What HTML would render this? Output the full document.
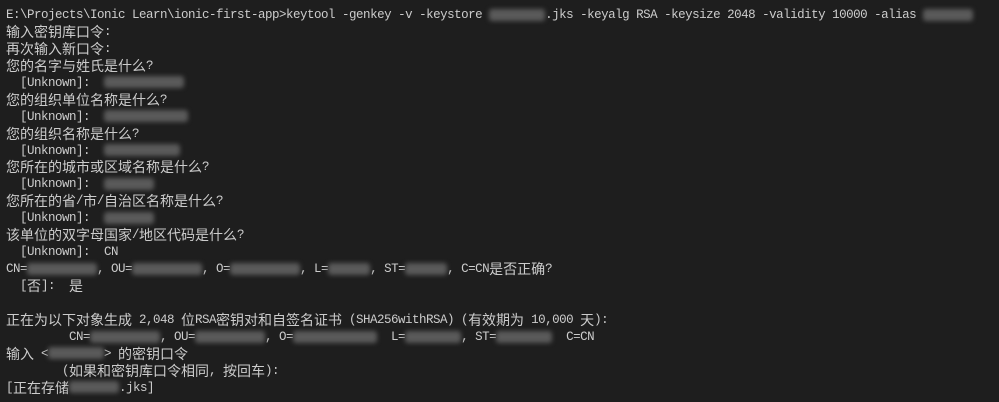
<!DOCTYPE html>
<html><head><meta charset="utf-8"><style>
html,body{margin:0;padding:0;background:#1e1e1e;}
body{width:999px;height:402px;overflow:hidden;position:relative;}
.t{position:absolute;left:6px;top:7px;color:#cccccc;font-family:"Liberation Mono","Noto Sans CJK SC",monospace;font-size:12.5px;letter-spacing:-0.5px;}
.t div{height:16.95px;line-height:16.95px;white-space:pre;overflow:visible;}
.c{font-family:"Noto Sans CJK SC","Liberation Sans",sans-serif;font-size:14px;line-height:10px;letter-spacing:0;position:relative;top:2px;}
.b{display:inline-block;background:#5a5a5a;filter:blur(2.5px);height:12px;vertical-align:middle;border-radius:3px;}
</style></head><body>
<div class="t">
<div>E:\Projects\Ionic Learn\ionic-first-app&gt;keytool -genkey -v -keystore <span class="b" style="width:56px"></span>.jks -keyalg RSA -keysize 2048 -validity 10000 -alias <span class="b" style="width:50px"></span></div>
<div><span class="c">输入密钥库口令</span>:</div>
<div><span class="c">再次输入新口令</span>:</div>
<div><span class="c">您的名字与姓氏是什么</span>?</div>
<div>  [Unknown]:  <span class="b" style="width:80px"></span></div>
<div><span class="c">您的组织单位名称是什么</span>?</div>
<div>  [Unknown]:  <span class="b" style="width:84px"></span></div>
<div><span class="c">您的组织名称是什么</span>?</div>
<div>  [Unknown]:  <span class="b" style="width:76px"></span></div>
<div><span class="c">您所在的城市或区域名称是什么</span>?</div>
<div>  [Unknown]:  <span class="b" style="width:50px"></span></div>
<div><span class="c">您所在的省</span>/<span class="c">市</span>/<span class="c">自治区名称是什么</span>?</div>
<div>  [Unknown]:  <span class="b" style="width:50px"></span></div>
<div><span class="c">该单位的双字母国家</span>/<span class="c">地区代码是什么</span>?</div>
<div>  [Unknown]:  CN</div>
<div>CN=<span class="b" style="width:70px"></span>, OU=<span class="b" style="width:70px"></span>, O=<span class="b" style="width:70px"></span>, L=<span class="b" style="width:42px"></span>, ST=<span class="b" style="width:42px"></span>, C=CN<span class="c">是否正确</span>?</div>
<div>  [<span class="c">否</span>]:  <span class="c">是</span></div>
<div> </div>
<div><span class="c">正在为以下对象生成</span> 2,048 <span class="c">位</span>RSA<span class="c">密钥对和自签名证书</span> (SHA256withRSA) (<span class="c">有效期为</span> 10,000 <span class="c">天</span>):</div>
<div>         CN=<span class="b" style="width:70px"></span>, OU=<span class="b" style="width:70px"></span>, O=<span class="b" style="width:84px"></span>  L=<span class="b" style="width:56px"></span>, ST=<span class="b" style="width:56px"></span>  C=CN</div>
<div><span class="c">输入</span> &lt;<span class="b" style="width:56px"></span>&gt; <span class="c">的密钥口令</span></div>
<div>        (<span class="c">如果和密钥库口令相同</span>, <span class="c">按回车</span>):</div>
<div>[<span class="c">正在存储</span><span class="b" style="width:50px"></span>.jks]</div>
</div>
</body></html>
